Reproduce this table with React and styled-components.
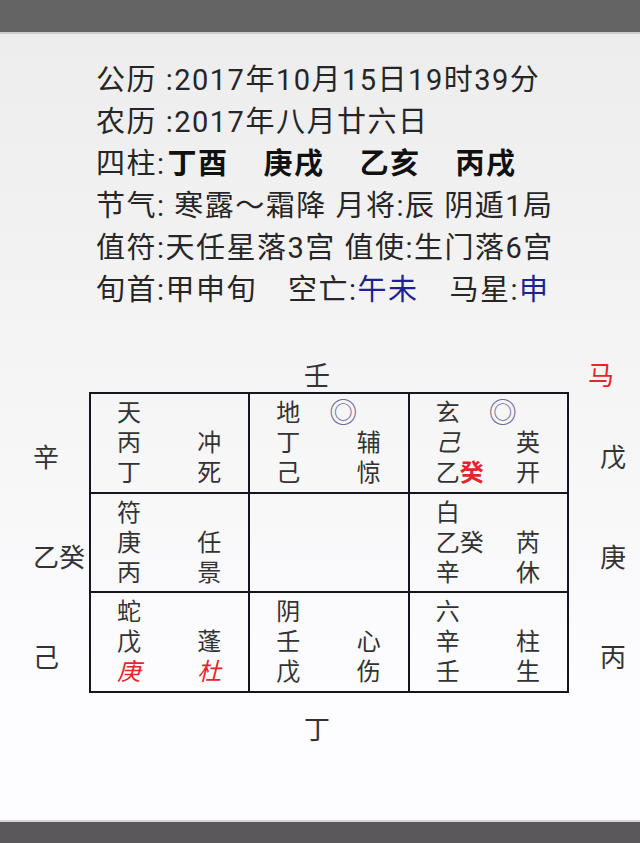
import styled, { createGlobalStyle } from 'styled-components';

const GlobalStyle = createGlobalStyle`
  html, body {
    margin: 0;
    padding: 0;
  }
  body {
    font-family: Roboto, "Noto Sans CJK SC", sans-serif;
    color: #262626;
  }
`;

const Page = styled.div`
  width: 640px;
  height: 843px;
  display: flex;
  flex-direction: column;
  overflow: hidden;
`;

const StatusBar = styled.div`
  height: 32px;
  flex-shrink: 0;
  background: #646464;
  border-bottom: 2px solid #cdcdcd;
`;

const NavBar = styled.div`
  height: 21px;
  flex-shrink: 0;
  background: #5a585b;
  border-top: 2px solid #d6d6d8;
`;

const Content = styled.div`
  flex: 1;
  background: linear-gradient(#ededed, #fdfcfe 85%);
  padding-top: 25px;
`;

const Info = styled.div`
  padding-left: 96px;
`;

const Line = styled.div`
  font-size: 29px;
  line-height: 42px;
  letter-spacing: 1.5px;
  white-space: pre;
  color: #262626;
`;

const Pillar = styled.span`
  font-weight: 700;
  color: #111;
  margin-left: ${(p) => (p.$gap ? '35px' : '2px')};
`;

const Gap = styled.span`
  display: inline-block;
  width: 31px;
`;

const Blue = styled.span`
  color: #1f2190;
`;

const Chart = styled.div`
  margin-top: 45px;
  display: grid;
  grid-template-columns: 89px 480px 1fr;
  font-family: "Noto Sans CJK SC", sans-serif;
  font-size: 26px;
  color: #333;
`;

const TopLabel = styled.div`
  height: 36px;
  line-height: 36px;
  padding-left: 215px;
`;

const HorseLabel = styled.div`
  height: 36px;
  line-height: 36px;
  padding-left: 19px;
  color: #e2262a;
`;

const BottomLabel = styled.div`
  padding: 17px 0 0 215px;
  line-height: 36px;
`;

const SideColumn = styled.div`
  display: flex;
  flex-direction: column;
  padding-left: ${(p) => (p.$right ? '31px' : '33px')};
`;

const SideLabel = styled.div`
  height: 100px;
  display: flex;
  align-items: center;
  padding-top: 26px;
  box-sizing: border-box;
`;

const Board = styled.div`
  width: 480px;
  height: 301px;
  box-sizing: border-box;
  border: 1px solid #16161f;
  display: grid;
  grid-template-columns: repeat(3, 1fr);
  grid-template-rows: repeat(3, 1fr);
`;

const Cell = styled.div`
  border: 1px solid #16161f;
  padding: 2px 27px 0 26px;
  font-size: 24px;
`;

const CellRow = styled.div`
  display: flex;
  justify-content: space-between;
  height: 30px;
  line-height: 30px;
`;

const CellText = styled.span`
  display: inline-block;
  height: 30px;
  overflow: visible;
`;

const Mark = styled.span`
  display: inline-block;
  margin-left: 29px;
  font-size: 28px;
  line-height: 30px;
  height: 30px;
  vertical-align: top;
  color: #6e6e9e;
`;

const Slant = styled.span`
  font-style: italic;
`;

const RedBold = styled.span`
  color: #e3262b;
  font-weight: 700;
`;

const RedSlant = styled.span`
  color: #e3262b;
  font-style: italic;
`;

const cells = [
  { top: '天', mark: false, rows: [['丙', '冲'], ['丁', '死']] },
  { top: '地', mark: true, rows: [['丁', '辅'], ['己', '惊']] },
  {
    top: '玄',
    mark: true,
    rows: [
      [<Slant>己</Slant>, '英'],
      [<span>乙<RedBold>癸</RedBold></span>, '开'],
    ],
  },
  { top: '符', mark: false, rows: [['庚', '任'], ['丙', '景']] },
  null,
  { top: '白', mark: false, rows: [['乙癸', '芮'], ['辛', '休']] },
  {
    top: '蛇',
    mark: false,
    rows: [
      ['戊', '蓬'],
      [<RedSlant>庚</RedSlant>, <RedSlant>杜</RedSlant>],
    ],
  },
  { top: '阴', mark: false, rows: [['壬', '心'], ['戊', '伤']] },
  { top: '六', mark: false, rows: [['辛', '柱'], ['壬', '生']] },
];

const leftLabels = ['辛', '乙癸', '己'];
const rightLabels = ['戊', '庚', '丙'];

export default function App() {
  return (
    <>
      <GlobalStyle />
      <Page>
        <StatusBar />
        <Content>
          <Info>
            <Line>公历 :2017年10月15日19时39分</Line>
            <Line>农历 :2017年八月廿六日</Line>
            <Line>
              四柱:<Pillar>丁酉</Pillar>
              <Pillar $gap>庚戌</Pillar>
              <Pillar $gap>乙亥</Pillar>
              <Pillar $gap>丙戌</Pillar>
            </Line>
            <Line>节气: 寒露～霜降 月将:辰 阴遁1局</Line>
            <Line>值符:天任星落3宫 值使:生门落6宫</Line>
            <Line>
              旬首:甲申旬<Gap />空亡:<Blue>午未</Blue>
              <Gap />马星:<Blue>申</Blue>
            </Line>
          </Info>

          <Chart>
            <span />
            <TopLabel>壬</TopLabel>
            <HorseLabel>马</HorseLabel>

            <SideColumn>
              {leftLabels.map((l) => (
                <SideLabel key={l}>{l}</SideLabel>
              ))}
            </SideColumn>
            <Board>
              {cells.map((c, i) => (
                <Cell key={i}>
                  {c && (
                    <>
                      <CellRow>
                        <CellText>
                          {c.top}
                          {c.mark && <Mark>◎</Mark>}
                        </CellText>
                      </CellRow>
                      {c.rows.map((r, j) => (
                        <CellRow key={j}>
                          <CellText>{r[0]}</CellText>
                          <CellText>{r[1]}</CellText>
                        </CellRow>
                      ))}
                    </>
                  )}
                </Cell>
              ))}
            </Board>
            <SideColumn $right>
              {rightLabels.map((l) => (
                <SideLabel key={l}>{l}</SideLabel>
              ))}
            </SideColumn>

            <span />
            <BottomLabel>丁</BottomLabel>
          </Chart>
        </Content>
        <NavBar />
      </Page>
    </>
  );
}
